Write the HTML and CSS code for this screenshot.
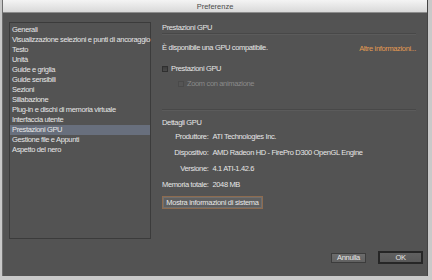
FILE: index.html
```html
<!DOCTYPE html>
<html lang="it">
<head>
  <meta charset="UTF-8">
  <meta name="viewport" content="width=device-width, initial-scale=1.0">
  <title>Preferenze</title>
  <link rel="stylesheet" href="styles.css">
</head>
<body>
  <div class="window">
    <div class="titlebar">Preferenze</div>

    <div class="content">
      <ul class="sections">
        <li>Generali</li>
        <li>Visualizzazione selezioni e punti di ancoraggio</li>
        <li>Testo</li>
        <li>Unità</li>
        <li>Guide e griglia</li>
        <li>Guide sensibili</li>
        <li>Sezioni</li>
        <li>Sillabazione</li>
        <li>Plug-in e dischi di memoria virtuale</li>
        <li>Interfaccia utente</li>
        <li class="selected">Prestazioni GPU</li>
        <li>Gestione file e Appunti</li>
        <li>Aspetto del nero</li>
      </ul>

      <div class="pane">
        <div class="pane-title">Prestazioni GPU</div>
        <div class="separator"></div>

        <div class="status-row">
          <span>È disponibile una GPU compatibile.</span>
          <a class="more-link" href="#">Altre informazioni...</a>
        </div>

        <label class="check-row">
          <span class="checkbox"></span>Prestazioni GPU
        </label>
        <label class="check-row sub disabled">
          <span class="checkbox"></span>Zoom con animazione
        </label>

        <div class="separator gap"></div>

        <div class="pane-title details-title">Dettagli GPU</div>
        <div class="details">
          <span class="label">Produttore:</span><span>ATI Technologies Inc.</span>
          <span class="label">Dispositivo:</span><span>AMD Radeon HD - FirePro D300 OpenGL Engine</span>
          <span class="label">Versione:</span><span>4.1 ATI-1.42.6</span>
          <span class="label">Memoria totale:</span><span>2048 MB</span>
        </div>

        <button class="btn sysinfo">Mostra informazioni di sistema</button>
      </div>
    </div>

    <div class="footer">
      <button class="btn">Annulla</button>
      <button class="btn default">OK</button>
    </div>
  </div>
</body>
</html>
```

FILE: styles.css
```css
body {
  margin: 0;
  width: 432px;
  height: 280px;
  overflow: hidden;
  background-color: #c9c9c9;
  font-family: "Liberation Sans", Arial, sans-serif;
  font-size: 7.5px;
  letter-spacing: -0.35px;
  color: #e6e6e6;
}
.window {
  margin-left: 2px;
  width: 426px;
  height: 276px;
  display: flex;
  flex-direction: column;
  background-color: #535353;
  border-left: 1px solid #6e6e6e;
  border-right: 1px solid #444444;
  box-sizing: border-box;
}
.titlebar {
  height: 13px;
  line-height: 14px;
  text-align: center;
  color: #4c4c4c;
  letter-spacing: 0;
  background: linear-gradient(#f4f4f4, #d9d9d9);
  border-bottom: 1px solid #8c8c8c;
  box-sizing: border-box;
  flex-shrink: 0;
}
.content {
  display: flex;
  padding: 9px 0 0 6px;
  gap: 11px;
}
.sections {
  list-style: none;
  margin: 0;
  padding: 2px 0 0 0;
  width: 142px;
  height: 217px;
  box-sizing: border-box;
  border: 1px solid #3b3b3b;
  background-color: #535353;
}
.sections li {
  height: 10px;
  line-height: 10px;
  padding-left: 2px;
  white-space: nowrap;
}
.sections li.selected {
  background-color: #686f7d;
}
.pane {
  width: 254px;
  padding-top: 1px;
}
.pane-title {
  line-height: 10px;
}
.separator {
  height: 1px;
  background-color: #484848;
  border-bottom: 1px solid #5b5b5b;
}
.separator.gap {
  margin-top: 20px;
}
.status-row {
  display: flex;
  justify-content: space-between;
  align-items: center;
  margin-top: 7px;
  line-height: 10px;
}
.more-link {
  color: #e39a52;
  text-decoration: none;
  margin-top: 2px;
}
.check-row {
  display: flex;
  align-items: center;
  gap: 2px;
  line-height: 10px;
  margin-top: 10px;
}
.check-row.sub {
  margin-top: 5px;
  padding-left: 16px;
}
.checkbox {
  width: 4px;
  height: 4px;
  border: 1px solid #2f2f2f;
  background: linear-gradient(#3c3c3c, #4a4a4a);
  margin-right: 1px;
}
.disabled {
  color: #8a8a8a;
}
.disabled .checkbox {
  border-color: #4a4a4a;
  background: #555555;
}
.details-title {
  margin-top: 7px;
}
.details {
  display: grid;
  grid-template-columns: auto 1fr;
  column-gap: 4px;
  row-gap: 6px;
  margin-top: 4px;
  line-height: 10px;
}
.details .label {
  text-align: right;
}
.btn {
  font-family: inherit;
  font-size: 7.5px;
  letter-spacing: -0.3px;
  color: #e6e6e6;
  background: linear-gradient(#6c6c6c, #616161);
  border: 1px solid #3c3c3c;
  padding: 0;
  cursor: pointer;
}
.sysinfo {
  margin-top: 6px;
  height: 13px;
  width: 101px;
  border: 1px solid #8d6b4f;
  box-shadow: inset 0 0 0 1px #6f6f6f;
  background: #5f5f5f;
}
.footer {
  display: flex;
  justify-content: flex-end;
  align-items: center;
  gap: 12px;
  margin-top: 12px;
  padding-right: 4px;
}
.footer .btn {
  height: 10px;
  width: 35px;
  line-height: 8px;
}
.footer .btn.default {
  height: 13px;
  width: 45px;
  border: 2px solid #262626;
  background: linear-gradient(#606060, #585858);
}
```
